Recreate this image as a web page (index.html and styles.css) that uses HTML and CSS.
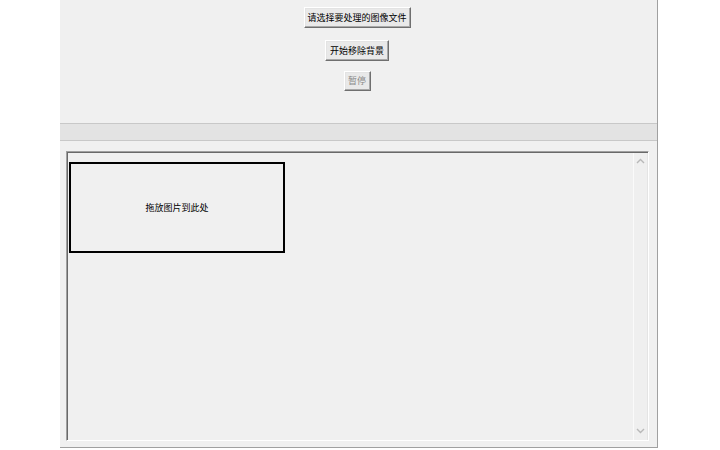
FILE: index.html
```html
<!DOCTYPE html>
<html lang="zh">
<head>
<meta charset="utf-8">
<title>背景移除</title>
<link rel="stylesheet" href="styles.css">
</head>
<body>
<div class="window">
  <div class="top-panel">
    <button class="btn btn-select">请选择要处理的图像文件</button>
    <button class="btn btn-start">开始移除背景</button>
    <button class="btn btn-pause" disabled>暂停</button>
  </div>
  <div class="band"></div>
  <div class="lower-panel">
    <div class="textarea">
      <div class="content">
        <div class="dropbox">拖放图片到此处</div>
      </div>
      <div class="scrollbar">
        <svg class="arrow" width="9" height="6" viewBox="0 0 9 6"><path d="M1 5 L4.5 1.5 L8 5" fill="none" stroke="#b8b8b8" stroke-width="1.4"/></svg>
        <svg class="arrow" width="9" height="6" viewBox="0 0 9 6"><path d="M1 1 L4.5 4.5 L8 1" fill="none" stroke="#b8b8b8" stroke-width="1.4"/></svg>
      </div>
    </div>
  </div>
</div>
</body>
</html>
```

FILE: styles.css
```css
html, body {
  margin: 0;
  padding: 0;
  background: #ffffff;
  font-family: "Noto Sans CJK SC", "Noto Sans", sans-serif;
}

.window {
  margin-left: 60px;
  width: 597px;
  height: 447px;
  background: #f0f0f0;
  border-right: 1px solid #a0a0a0;
  border-bottom: 1px solid #a0a0a0;
  display: flex;
  flex-direction: column;
}

.top-panel {
  height: 123px;
  display: flex;
  flex-direction: column;
  align-items: center;
  box-sizing: border-box;
  padding-right: 3px;
}

.btn {
  font-family: "Noto Sans CJK SC", sans-serif;
  font-size: 9px;
  line-height: 12px;
  white-space: nowrap;
  color: #000000;
  background: #e9e9e9;
  border-top: 1px solid #ffffff;
  border-left: 1px solid #ffffff;
  border-right: 1px solid #6f6f6f;
  border-bottom: 1px solid #6f6f6f;
  box-shadow: inset -1px -1px 0 #a8a8a8, inset 1px 1px 0 #e3e3e3;
  padding: 0;
  height: 21px;
  margin: 0;
  box-sizing: border-box;
}

.btn-select {
  margin-top: 7px;
  width: 107px;
}

.btn-start {
  margin-top: 12px;
  width: 64px;
}

.btn-pause {
  margin-top: 10px;
  width: 27px;
  height: 20px;
  color: #8a8a8a;
}

.band {
  height: 16px;
  background: #e3e3e3;
  border-top: 1px solid #c8c8c8;
  border-bottom: 1px solid #c8c8c8;
}

.lower-panel {
  flex: 1;
  padding: 10px 8px 6px 6px;
  display: flex;
}

.textarea {
  flex: 1;
  display: flex;
  border-top: 1px solid #a0a0a0;
  border-left: 1px solid #a0a0a0;
  border-right: 1px solid #ffffff;
  border-bottom: 1px solid #ffffff;
  box-shadow: inset 1px 1px 0 #696969;
  background: #f0f0f0;
}

.content {
  flex: 1;
  padding: 10px 0 0 2px;
}

.dropbox {
  width: 216px;
  height: 91px;
  box-sizing: border-box;
  border: 2px solid #000000;
  display: flex;
  align-items: center;
  justify-content: center;
  font-size: 9px;
  color: #000000;
}

.scrollbar {
  width: 13px;
  border-left: 1px solid #fafafa;
  border-right: 1px solid #e4e4e4;
  margin-top: 1px;
  background: #efefef;
  display: flex;
  flex-direction: column;
  justify-content: space-between;
  align-items: center;
  padding: 5px 0 6px;
}

.arrow {
  display: block;
}
```
